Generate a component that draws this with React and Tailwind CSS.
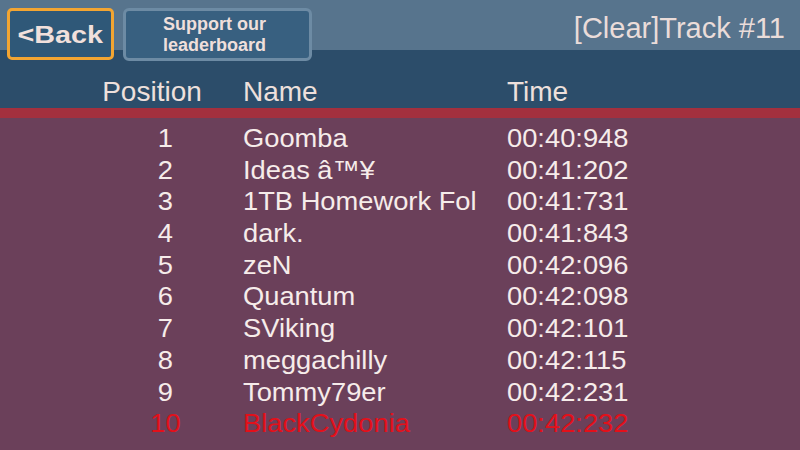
import React from "react";

const rows = [
  ["1", "Goomba", "00:40:948"],
  ["2", "Ideas â™¥", "00:41:202"],
  ["3", "1TB Homework Fol", "00:41:731"],
  ["4", "dark.", "00:41:843"],
  ["5", "zeN", "00:42:096"],
  ["6", "Quantum", "00:42:098"],
  ["7", "SViking", "00:42:101"],
  ["8", "meggachilly", "00:42:115"],
  ["9", "Tommy79er", "00:42:231"],
  ["10", "BlackCydonia", "00:42:232"],
];

export default function App() {
  return (
    <div
      className="w-[800px] h-[450px] overflow-hidden flex flex-col bg-[#6b405a] text-[#f3e8e5]"
      style={{ fontFamily: '"Liberation Sans", Arial, sans-serif' }}
    >
      {/* top bar */}
      <div className="relative z-10 h-[50px] shrink-0 bg-[#57748d] flex items-start pl-[7px] pr-[15px]">
        <div className="mt-[8px] w-[107px] h-[52px] rounded-[5px] border-[3px] border-[#f3a532] bg-[#2f5878] flex items-center justify-center pt-[3px]">
          <span className="inline-block font-bold text-[23px] leading-none scale-x-[1.25] text-[#f1e0dc]">&lt;Back</span>
        </div>
        <div className="ml-[9px] mt-[8px] w-[189px] h-[53px] rounded-[6px] border-[3px] border-[#6d8ba4] bg-[#386080] flex flex-col items-center justify-center text-[#efdfdb]">
          <span className="font-bold text-[18px] leading-[21px] pr-[6px]">Support our</span>
          <span className="font-bold text-[18px] leading-[21px] pr-[6px]">leaderboard</span>
        </div>
        <div className="ml-auto pt-[14px] text-[29px] leading-[29px] text-[#eadcd9]">[Clear]Track #11</div>
      </div>

      {/* header band */}
      <div className="h-[58px] shrink-0 bg-[#2c4d6a] flex pt-[28px] text-[28px] leading-[28px] text-[#eee0dc]">
        <div className="ml-[102px] w-[100px] text-center whitespace-nowrap">Position</div>
        <div className="ml-[41px] w-[264px]">Name</div>
        <div>Time</div>
      </div>

      {/* red line */}
      <div className="h-[10px] shrink-0 bg-[#a3303e]" />

      {/* rows */}
      <div className="flex flex-col pt-[5px]">
        {rows.map(([pos, name, time], i) => {
          const last = i === rows.length - 1;
          return (
            <div
              key={pos}
              className={
                "flex h-[31.7px] text-[26px] leading-[31.7px] " +
                (last ? "text-[#e3101a]" : "text-[#f6ecea]")
              }
            >
              <div className="ml-[125px] w-[80px] text-center">
                <span className="inline-block scale-x-[1.05] origin-center">{pos}</span>
              </div>
              <div className="ml-[38px] w-[264px] whitespace-nowrap">
                <span className="inline-block scale-x-[1.05] origin-left">{name}</span>
              </div>
              <div className="whitespace-nowrap">
                <span className="inline-block scale-x-[1.05] origin-left">{time}</span>
              </div>
            </div>
          );
        })}
      </div>
    </div>
  );
}
